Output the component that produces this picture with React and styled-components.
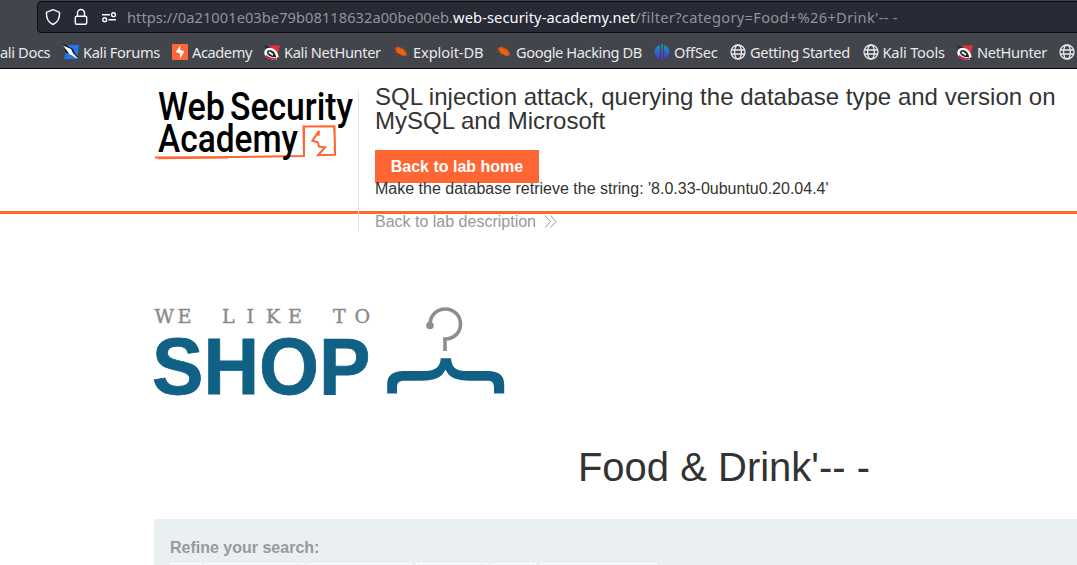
import React from "react";
import styled, { createGlobalStyle } from "styled-components";

const GlobalStyle = createGlobalStyle`
  * { box-sizing: border-box; }
  html, body { margin: 0; background: #fff; overflow: hidden; }
  body { font-family: "Liberation Sans", Arial, sans-serif; font-size: 16px; color: #333332; }
`;

const Page = styled.div`
  width: 1077px;
  height: 565px;
  overflow: hidden;
  display: flex;
  flex-direction: column;
`;

const Chrome = styled.div`
  flex: none;
  height: 69px;
  background: #43454c;
  border-bottom: 1px solid #0c0c0d;
  font-family: "Noto Sans", sans-serif;
  overflow: hidden;
`;

const AddressBar = styled.div`
  margin: 1px 0 0 37px;
  width: 1060px;
  height: 32px;
  border: 1px solid #0c0d12;
  border-radius: 4px;
  background: #282a36;
  display: flex;
  align-items: center;
  padding-left: 7px;
`;

const AddressIcons = styled.svg`
  flex: none;
  width: 82px;
  height: 30px;
`;

const Url = styled.div`
  white-space: pre;
  font-size: 14.67px;
  line-height: 20px;
  letter-spacing: 0.04px;
  color: #929399;
`;

const Host = styled.span`
  color: #fbfbfe;
  letter-spacing: 0.09px;
`;

const Query = styled.span`
  letter-spacing: 0.31px;
`;

const Bookmarks = styled.div`
  display: flex;
  height: 36px;
  padding-top: 2px;
  align-items: center;
`;

const Bookmark = styled.div`
  flex: none;
  width: ${(p) => p.$width}px;
  display: flex;
  align-items: center;
  gap: ${(p) => p.$gap ?? 4}px;
  color: #e9e9ea;
  font-size: 14.67px;
  line-height: 20px;
  white-space: nowrap;
  letter-spacing: ${(p) => p.$spacing ?? -0.37}px;
`;

const Favicon = styled.svg`
  flex: none;
  width: 16px;
  height: 16px;
  overflow: visible;
`;

const Header = styled.header`
  flex: none;
  height: 145px;
  border-bottom: 3px solid #ff6633;
  padding-left: 154px;
  display: flex;
  align-items: flex-start;
`;

const AcademyLogo = styled.svg`
  flex: none;
  width: 204px;
  height: 84px;
  margin-top: 16px;
  overflow: visible;
`;

const LabInfo = styled.div`
  position: relative;
  flex: 1;
  height: 141px;
  margin-top: 22px;
  padding-left: 16px;
  border-left: 1px solid #e1e1e1;
`;

const LabTitle = styled.h2`
  margin: -6px 0 17px;
  font-size: 24px;
  line-height: 24px;
  font-weight: 400;
  letter-spacing: 0.016px;
  white-space: nowrap;
`;

const LabButton = styled.a`
  display: block;
  width: 164px;
  height: 33px;
  background: #ff6633;
  color: #fff;
  font-weight: 700;
  line-height: 33px;
  text-align: center;
`;

const Task = styled.p`
  margin: -3px 0 0;
  line-height: 18px;
`;

const BackLink = styled.a`
  display: flex;
  align-items: center;
  gap: 8px;
  height: 18px;
  margin-top: 15px;
  color: #999;
`;

const Chevrons = styled.svg`
  width: 13px;
  height: 13px;
  margin-top: -2px;
`;

const Content = styled.main`
  padding: 86px 0 0 154px;
`;

const ShopLogo = styled.svg`
  display: block;
  width: 356px;
  height: 106px;
  overflow: visible;
`;

const Category = styled.h1`
  margin: 38px 0 28px;
  width: 1140px;
  height: 47px;
  font-size: 40px;
  line-height: 47px;
  font-weight: 400;
  text-align: center;
`;

const Filters = styled.section`
  height: 60px;
  padding: 19px 0 0 16px;
  background: #eaeff2;
`;

const FiltersLabel = styled.label`
  display: block;
  height: 25px;
  line-height: 20px;
  font-weight: 700;
  color: #999;
`;

const Tags = styled.div`
  display: flex;
  gap: 4px;
`;

const Tag = styled.div`
  width: ${(p) => p.$width}px;
  height: 30px;
  border: 1px solid #fff;
`;

const Globe = () => (
  <g fill="none" stroke="#e9e9ea" strokeWidth="1.3">
    <circle cx="8" cy="8" r="7" />
    <ellipse cx="8" cy="8" rx="3.4" ry="7" />
    <path d="M1.5 6h13M1.5 10h13" />
  </g>
);

const Forums = () => (
  <g>
    <path d="M5 1h11l-2 14H1l2-8z" fill="#2478ef" />
    <path d="M0 0l5 2 5 3 2 4 3 4-2 1-5-4-5-1z" fill="#161a22" />
    <path d="M0 1.500l8 3.500 2 4 5 5.500-3-1-6-4.500z" fill="#fff" />
    <path d="M3 3.500l4 6 4 1.500" fill="none" stroke="#fff" strokeWidth="1.800" />
  </g>
);

const Burp = () => (
  <g>
    <path d="M0 0h16v16H0z" fill="#ff6633" />
    <path d="M8.500 1l-.3 5 4.300 1.300-4.700 7.700.2-5.500L3.700 8z" fill="#fff" />
  </g>
);

const Hunter = () => (
  <g>
    <path d="M0 1l5 2 4 1 4 5 1 6-6 0z" fill="#22232a" />
    <path d="M4.500 1.500H16L13 12 9 5z" fill="#ee2c36" />
    <path d="M13.500 13.500C12 3.500 2.500 3 1.500 8c-.2 5 5 6.500 11 6.500" fill="none" stroke="#fff" strokeWidth="2.400" />
    <path d="M2 11.500c2 3 6 3.500 10 3.300" fill="none" stroke="#d91a35" strokeWidth="1.600" />
    <path d="M5 8l4 3" stroke="#fff" strokeWidth="1.600" />
  </g>
);

const Bug = () => (
  <g>
    <path d="M2 5l2-2 4 .7 3.500 2.300 2.500 4.500-2 1.500-3-.6-4.500-2.400z" fill="#f0600e" />
    <path d="M5 2l2 2.500 5-.5M.5 8l3 .3M10 6l4 1.500M11 10l3 2M5.500 9.500l-1.500 2 2 1M1 4l3 1" fill="none" stroke="#a34c20" strokeWidth=".7" />
  </g>
);

const OffSec = () => (
  <g>
    <defs>
      <linearGradient id="offsec" gradientUnits="userSpaceOnUse" x1="0" y1="0" x2="0" y2="16">
        <stop offset="0" stopColor="#14a5b8" />
        <stop offset=".5" stopColor="#2a67cc" />
        <stop offset="1" stopColor="#6526dc" />
      </linearGradient>
    </defs>
    <path d="M5.800 1v14C-1 12-1.500 4 5.800 1zM10.200 1v14c6.800-3 7.300-11 0-14zM7.200 0h1.600v16H7.200z" fill="url(#offsec)" />
  </g>
);

const BOOKMARKS = [
  { label: "ali Docs", width: 63, gap: 0 },
  { label: "Kali Forums", icon: Forums, width: 109 },
  { label: "Academy", icon: Burp, width: 92, spacing: -0.45 },
  { label: "Kali NetHunter", icon: Hunter, width: 129 },
  { label: "Exploit-DB", icon: Bug, width: 103, spacing: -0.12 },
  { label: "Google Hacking DB", icon: Bug, width: 158, spacing: -0.42 },
  { label: "OffSec", icon: OffSec, width: 76, spacing: -0.2 },
  { label: "Getting Started", icon: Globe, width: 132.5 },
  { label: "Kali Tools", icon: Globe, width: 94.5, spacing: -0.2 },
  { label: "NetHunter", icon: Hunter, width: 102 },
  { label: "", icon: Globe, width: 20 },
];

const TAG_WIDTHS = [31, 98, 105, 71, 45, 117];

export default function App() {
  return (
    <Page>
      <GlobalStyle />
      <Chrome>
        <AddressBar>
          <AddressIcons viewBox="45 2 82 30" fill="none" stroke="#fbfbfe" strokeWidth="1.4">
            <path d="M53 9.700l6.600 2.600c.2 6-1.800 10.200-6.600 12.200-4.800-2-6.800-6.200-6.600-12.200z" strokeLinejoin="round" />
            <rect x="75.300" y="16.300" width="11.400" height="8" rx="1.500" />
            <path d="M77.500 16v-3a3.500 3.500 0 0 1 7 0v3" />
            <path d="M102 14.700h8M108.500 19.700h7.500" />
            <circle cx="113.500" cy="14.700" r="1.900" />
            <circle cx="104.700" cy="19.700" r="1.900" />
          </AddressIcons>
          <Url>
            https://0a21001e03be79b08118632a00be00eb.<Host>web-security-academy.net</Host>
            <Query>{"/filter?category=Food+%26+Drink'-- -"}</Query>
          </Url>
        </AddressBar>
        <Bookmarks>
          {BOOKMARKS.map(({ label, icon: Icon, width, gap, spacing }, i) => (
            <Bookmark key={i} $width={width} $gap={gap} $spacing={spacing}>
              {Icon && <Favicon viewBox="0 0 16 16"><Icon /></Favicon>}
              {label}
            </Bookmark>
          ))}
        </Bookmarks>
      </Chrome>
      <Header>
        <AcademyLogo viewBox="154 85 204 84">
          <g fill="#000" fontFamily="Roboto, sans-serif" fontWeight="500" fontSize="38">
            <text x="158" y="119.500" textLength="67" lengthAdjust="spacingAndGlyphs">Web</text>
            <text x="230" y="119.500" textLength="123" lengthAdjust="spacingAndGlyphs">Security</text>
          </g>
          <g fill="none" stroke="#ff6633" strokeWidth="2">
            <path d="M155 157.500l81-.4 68-1-.5-29.500 31-.3.500 28.500-17 .5 7-7.800-6-.9-1.200-4.400-5.500-1.600 6.700-9.700-.5 5" />
            <path d="M158 158.600l70-.6M304.500 126.500l-.5 29M334 127l1.500 27" strokeWidth="1.200" />
          </g>
          <text x="158" y="152.200" fill="#000" fontFamily="Roboto, sans-serif" fontWeight="500" fontSize="38" textLength="140" lengthAdjust="spacingAndGlyphs">Academy</text>
        </AcademyLogo>
        <LabInfo>
          <LabTitle>
            SQL injection attack, querying the database type and version on<br />
            MySQL and Microsoft
          </LabTitle>
          <LabButton>Back to lab home</LabButton>
          <Task>Make the database retrieve the string: '8.0.33-0ubuntu0.20.04.4'</Task>
          <BackLink>
            Back to lab description
            <Chevrons viewBox="0 0 13 13" fill="none" stroke="#999" strokeWidth="1">
              <path d="M1 .5l5.500 6-5.500 6M6.500 .5l5.500 6-5.500 6" />
            </Chevrons>
          </BackLink>
        </LabInfo>
      </Header>
      <Content>
        <ShopLogo viewBox="154 300 356 106">
          <text
            x="154.500 177.500 200 222 246.500 266 288 310 333 354.500"
            y="322.500"
            fill="#8a8a8a"
            stroke="#8a8a8a"
            strokeWidth=".4"
            fontFamily="'DejaVu Serif', serif"
            fontSize="19"
          >
            WE LIKE TO
          </text>
          <text x="152" y="394" fill="#116085" stroke="#116085" strokeWidth=".8" fontFamily="'Liberation Sans', sans-serif" fontWeight="700" fontSize="80" textLength="218.500" lengthAdjust="spacingAndGlyphs">SHOP</text>
          <path d="M430 325c0-10 7-16 15.500-16 8 0 15 6.500 15 15 0 9-7 15-15.500 15v12" fill="none" stroke="#8d8d8d" strokeWidth="3.600" />
          <circle cx="430" cy="325.500" r="3.800" fill="#8d8d8d" />
          <path d="M440.700 358.300H451c.5 9 5 12.700 14 12.700h23c11 0 16.200 5 16.200 13v9.500H494v-6c0-5-2-6.800-7-6.800h-18c-12 0-20-3-23.500-11.200C442 377.700 434 380.700 422 380.700h-18c-5 0-7 2-7 6.800v6h-9.800V384c0-8 5.300-13 16.300-13h22c9 0 15-3.700 15.200-12.700z" fill="#116085" />
        </ShopLogo>
        <Category>Food &amp; Drink'-- -</Category>
        <Filters>
          <FiltersLabel>Refine your search:</FiltersLabel>
          <Tags>
            {TAG_WIDTHS.map((width, i) => <Tag key={i} $width={width} />)}
          </Tags>
        </Filters>
      </Content>
    </Page>
  );
}
